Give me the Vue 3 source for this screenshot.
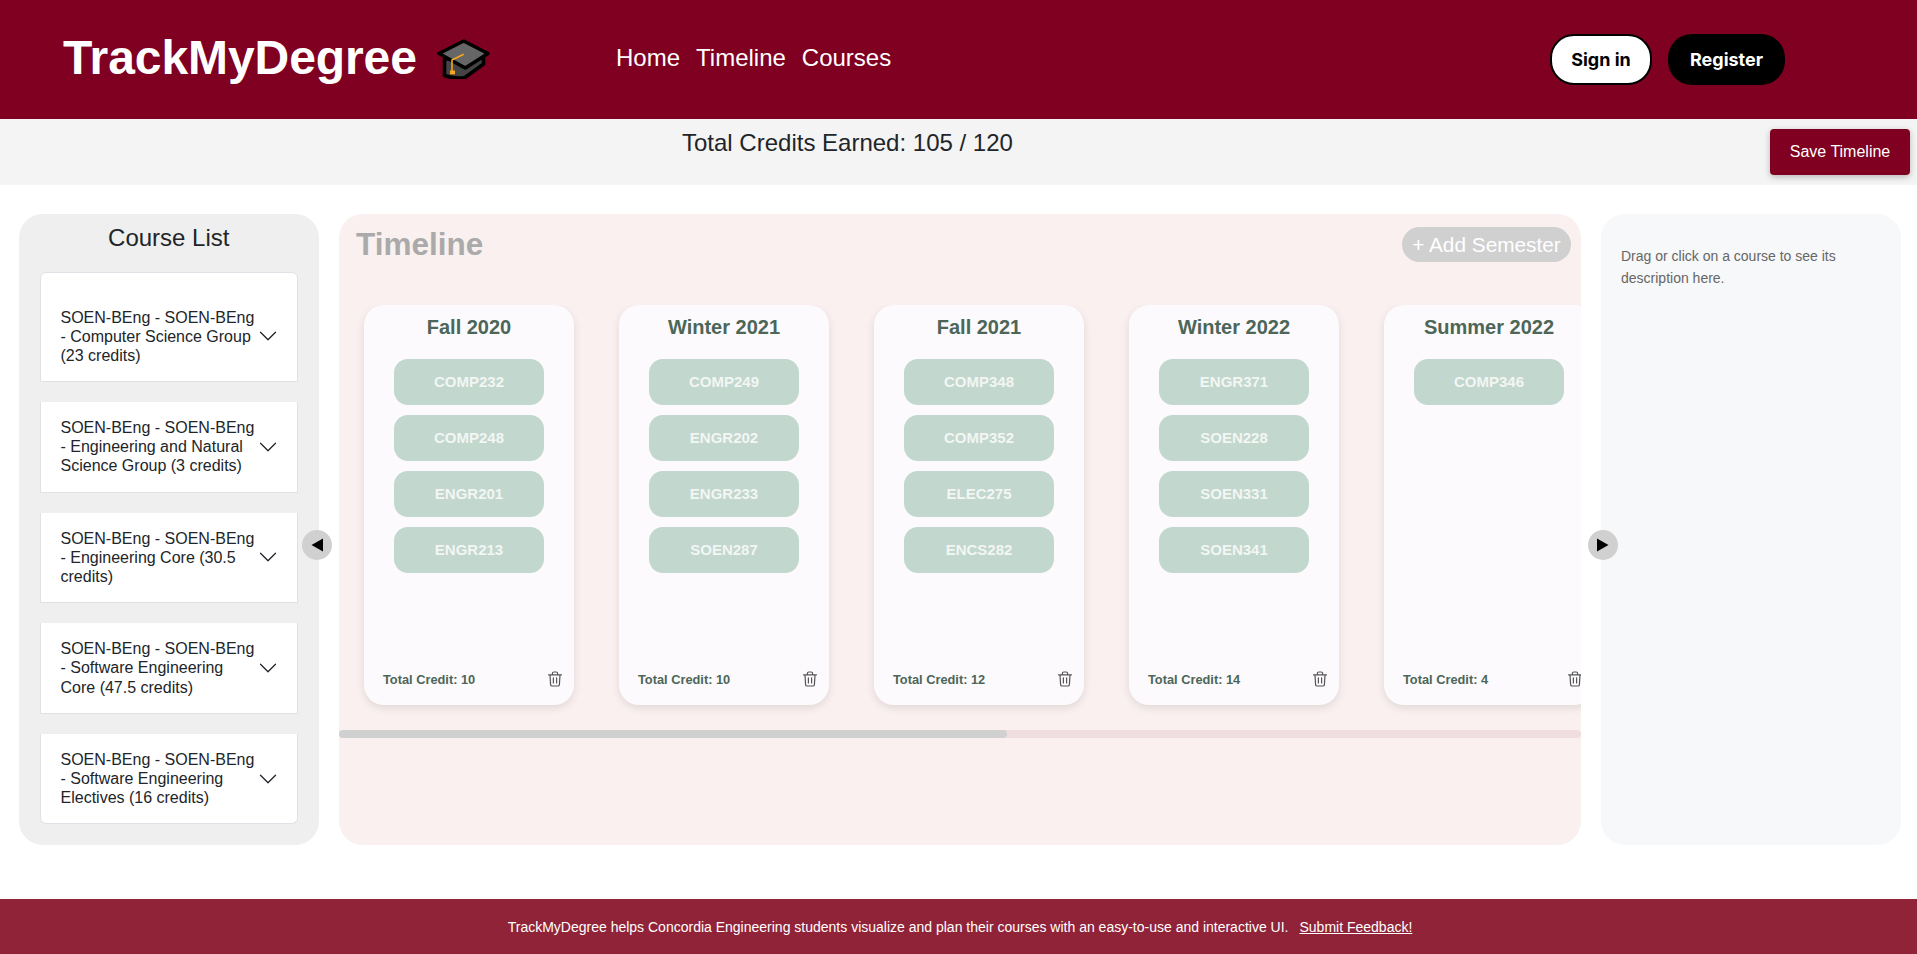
<template>
  <div class="page">
    <header class="topbar">
      <div class="brand">
        <span class="brand-name">TrackMyDegree</span>
        <svg class="cap" viewBox="0 0 53 40" aria-hidden="true">
          <path d="M7.5 20 L7.5 36.5 C14 39 22 39.5 28 38.5 L46.5 25 L46.5 19 Z" fill="#444" stroke="#000" stroke-width="3.6" stroke-linejoin="round" />
          <path d="M26.7 2 L51 14.5 L28.3 29 L2 14.5 Z" fill="#666" stroke="#000" stroke-width="3.6" stroke-linejoin="round" />
          <path d="M26.7 15.3 L15 21 L15 32" fill="none" stroke="#f5a623" stroke-width="1.6" />
          <rect x="13" y="31.5" width="5" height="3.8" fill="#f5a623" />
        </svg>
      </div>
      <nav class="nav">
        <a v-for="link in navLinks" :key="link">{{ link }}</a>
      </nav>
      <div class="auth">
        <button class="btn-signin">Sign in</button>
        <button class="btn-register">Register</button>
      </div>
    </header>

    <div class="credits-bar">
      <h4 class="credits-text">Total Credits Earned: 105 / 120</h4>
      <button class="btn-save">Save Timeline</button>
    </div>

    <main class="workspace">
      <aside class="course-list">
        <h3>Course List</h3>
        <div class="accordion">
          <div v-for="group in courseGroups" :key="group" class="accordion-item">
            <span class="accordion-label">{{ group }}</span>
            <svg class="chevron" viewBox="0 0 16 16" aria-hidden="true">
              <path fill-rule="evenodd" d="M1.646 4.646a.5.5 0 0 1 .708 0L8 10.293l5.646-5.647a.5.5 0 0 1 .708.708l-6 6a.5.5 0 0 1-.708 0l-6-6a.5.5 0 0 1 0-.708z" />
            </svg>
          </div>
        </div>
      </aside>

      <div class="timeline-wrap">
        <button class="arrow arrow-left" aria-label="Hide course list">
          <svg viewBox="0 0 12 14"><path d="M12 0.5 V13.5 L0.5 7 Z" /></svg>
        </button>
        <section class="timeline">
          <div class="timeline-head">
            <h2>Timeline</h2>
            <button class="btn-add">+ Add Semester</button>
          </div>
          <div class="semesters">
            <article v-for="sem in semesters" :key="sem.name" class="semester">
              <h3>{{ sem.name }}</h3>
              <div class="chips">
                <div v-for="code in sem.courses" :key="code" class="chip">{{ code }}</div>
              </div>
              <div class="semester-foot">
                <span>Total Credit: {{ sem.credits }}</span>
                <svg class="trash" viewBox="0 0 16 16" aria-hidden="true">
                  <path d="M1.5 3.8 H14.5 M5.4 3.6 V2.4 C5.4 1.6 6 1 6.8 1 H9.2 C10 1 10.6 1.6 10.6 2.4 V3.6 M3 4 L3.6 13.6 C3.7 14.5 4.3 15 5.1 15 H10.9 C11.7 15 12.3 14.5 12.4 13.6 L13 4 M6.4 6.8 V12 M9.6 6.8 V12" />
                </svg>
              </div>
            </article>
          </div>
          <div class="scroll-track">
            <div class="scroll-thumb"></div>
          </div>
        </section>
        <button class="arrow arrow-right" aria-label="Hide description">
          <svg viewBox="0 0 12 14"><path d="M0 0.5 V13.5 L11.5 7 Z" /></svg>
        </button>
      </div>

      <aside class="description">
        <p>Drag or click on a course to see its description here.</p>
      </aside>
    </main>

    <footer class="footer">
      <span>TrackMyDegree helps Concordia Engineering students visualize and plan their courses with an easy-to-use and interactive UI.</span>
      <a>Submit Feedback!</a>
    </footer>
  </div>
</template>

<script setup>
const navLinks = ['Home', 'Timeline', 'Courses']

const courseGroups = [
  'SOEN-BEng - SOEN-BEng - Computer Science Group (23 credits)',
  'SOEN-BEng - SOEN-BEng - Engineering and Natural Science Group (3 credits)',
  'SOEN-BEng - SOEN-BEng - Engineering Core (30.5 credits)',
  'SOEN-BEng - SOEN-BEng - Software Engineering Core (47.5 credits)',
  'SOEN-BEng - SOEN-BEng - Software Engineering Electives (16 credits)'
]

const semesters = [
  { name: 'Fall 2020', credits: 10, courses: ['COMP232', 'COMP248', 'ENGR201', 'ENGR213'] },
  { name: 'Winter 2021', credits: 10, courses: ['COMP249', 'ENGR202', 'ENGR233', 'SOEN287'] },
  { name: 'Fall 2021', credits: 12, courses: ['COMP348', 'COMP352', 'ELEC275', 'ENCS282'] },
  { name: 'Winter 2022', credits: 14, courses: ['ENGR371', 'SOEN228', 'SOEN331', 'SOEN341'] },
  { name: 'Summer 2022', credits: 4, courses: ['COMP346'] }
]
</script>

<style>
html,
body {
  margin: 0;
  background: #fff;
}
</style>

<style scoped>
.page {
  height: 954px;
  display: flex;
  flex-direction: column;
  font-family: 'Liberation Sans', Arial, sans-serif;
  color: #212529;
  overflow: hidden;
}

.topbar {
  height: 119px;
  flex-shrink: 0;
  background: #7f0020;
  display: flex;
  align-items: center;
  padding: 0 132px 0 63px;
  box-sizing: border-box;
}

.brand {
  width: 553px;
  display: flex;
  align-items: center;
  gap: 20px;
  margin-top: -4px;
}

.brand-name {
  font-size: 48px;
  font-weight: 700;
  letter-spacing: -0.08px;
  color: #fff;
}

.cap {
  width: 53px;
  height: 40px;
  margin-top: 3px;
}

.nav {
  display: flex;
  gap: 16px;
  margin-top: -4px;
}

.nav a {
  color: #fff;
  font-size: 24px;
}

.auth {
  margin-left: auto;
  display: flex;
  gap: 16px;
}

.auth button {
  height: 51px;
  border-radius: 24px;
  font-family: Inter, sans-serif;
  font-size: 18px;
  font-weight: 700;
  box-sizing: border-box;
}

.btn-signin {
  width: 102px;
  background: #fff;
  color: #000;
  border: 2px solid #000;
}

.btn-register {
  width: 117px;
  background: #000;
  color: #fff;
  border: none;
}

.credits-bar {
  height: 66px;
  flex-shrink: 0;
  background: #f4f4f4;
  display: flex;
  align-items: flex-start;
  justify-content: space-between;
  padding: 10px 7px 10px 682px;
  box-sizing: border-box;
}

.credits-text {
  margin: 0;
  font-size: 24px;
  font-weight: 400;
  line-height: 27px;
}

.btn-save {
  width: 140px;
  height: 46px;
  background: #7f0020;
  color: #fff;
  border: none;
  border-radius: 4px;
  font-family: inherit;
  font-size: 16px;
  box-shadow: 0 2px 6px rgba(0, 0, 0, 0.25);
}

.workspace {
  display: flex;
  gap: 20px;
  height: 631px;
  margin: 29px 16px 54px 19px;
}

.course-list {
  width: 300px;
  flex-shrink: 0;
  background: #efefef;
  border-radius: 24px;
  padding: 9px 21px 0 20.5px;
  box-sizing: border-box;
}

.course-list h3 {
  margin: 0 0 19.5px;
  font-size: 24px;
  font-weight: 400;
  line-height: 29px;
  text-align: center;
}

.accordion {
  display: flex;
  flex-direction: column;
  gap: 20px;
}

.accordion-item {
  display: flex;
  align-items: center;
  gap: 3px;
  background: #fff;
  border: 1px solid #dee2e6;
  border-top: 0;
  padding: 16px 19px 16px 20px;
  font-size: 16px;
  line-height: 1.2;
}

.accordion-item:first-child {
  border-top: 1px solid #dee2e6;
  border-radius: 6px 6px 0 0;
  padding-top: 35px;
}

.accordion-item:last-child {
  border-radius: 0 0 6px 6px;
}

.accordion-label {
  flex: 1;
}

.chevron {
  width: 20px;
  height: 20px;
  flex-shrink: 0;
  fill: #212529;
}

.timeline-wrap {
  position: relative;
  width: 1242px;
  flex-shrink: 0;
}

.timeline {
  height: 100%;
  background: #f9f0ef;
  border-radius: 24px;
  overflow: hidden;
}

.timeline-head {
  display: flex;
  align-items: center;
  justify-content: space-between;
  padding: 12px 10px 0 17px;
}

.timeline-head h2 {
  margin: 0;
  font-size: 31.5px;
  font-weight: 700;
  color: #aaa;
}

.btn-add {
  height: 35px;
  width: 169px;
  padding: 0;
  background: #d0d0d0;
  color: #fff;
  border: none;
  border-radius: 18px;
  font-family: inherit;
  font-size: 20.8px;
}

.semesters {
  display: flex;
  gap: 45px;
  margin-top: 42px;
  padding: 0 0 25px 25px;
  overflow: hidden;
}

.scroll-track {
  height: 8px;
  background: #f0dde0;
  border-radius: 4px;
}

.scroll-thumb {
  width: 668px;
  height: 100%;
  background: #d0d0d0;
  border-radius: 4px;
}

.semester {
  width: 210px;
  height: 400px;
  flex-shrink: 0;
  background: #fcfafd;
  border-radius: 20px;
  box-shadow: 0 3px 8px rgba(0, 0, 0, 0.1);
  display: flex;
  flex-direction: column;
  box-sizing: border-box;
  padding: 10px 0 0;
}

.semester h3 {
  margin: 0;
  font-size: 20px;
  font-weight: 700;
  line-height: 24px;
  text-align: center;
  color: #4c6658;
}

.chips {
  flex: 1;
  display: flex;
  flex-direction: column;
  align-items: center;
  gap: 10px;
  margin-top: 20px;
}

.chip {
  width: 150px;
  height: 46px;
  line-height: 46px;
  text-align: center;
  background: #c2d7cd;
  color: #f2f6f4;
  border-radius: 14px;
  font-size: 15px;
  font-weight: 700;
}

.semester-foot {
  display: flex;
  align-items: center;
  justify-content: space-between;
  padding: 0 11px 18px 19px;
  font-size: 12.8px;
  font-weight: 700;
  color: #4c6658;
}

.trash {
  width: 16px;
  height: 16px;
  fill: none;
  stroke: #555;
  stroke-width: 1.2;
  stroke-linecap: round;
  stroke-linejoin: round;
}

.arrow {
  position: absolute;
  top: 316px;
  width: 30px;
  height: 30px;
  padding: 0;
  border: none;
  border-radius: 50%;
  background: #d0d0d0;
  display: flex;
  align-items: center;
  justify-content: center;
}

.arrow svg {
  width: 12px;
  height: 14px;
  fill: #000;
}

.arrow-left {
  left: -37px;
}

.arrow-right {
  right: -37px;
}

.description {
  width: 300px;
  flex-shrink: 0;
  background: #f7f8fa;
  border-radius: 24px;
  padding: 31px 20px;
  box-sizing: border-box;
}

.description p {
  margin: 0;
  font-size: 14px;
  line-height: 22px;
  color: #666;
}

.footer {
  height: 55px;
  flex-shrink: 0;
  background: #912338;
  color: #fff;
  font-size: 14px;
  display: flex;
  align-items: center;
  justify-content: center;
  gap: 11px;
  padding-left: 3px;
}

.footer a {
  text-decoration: underline;
}
</style>
